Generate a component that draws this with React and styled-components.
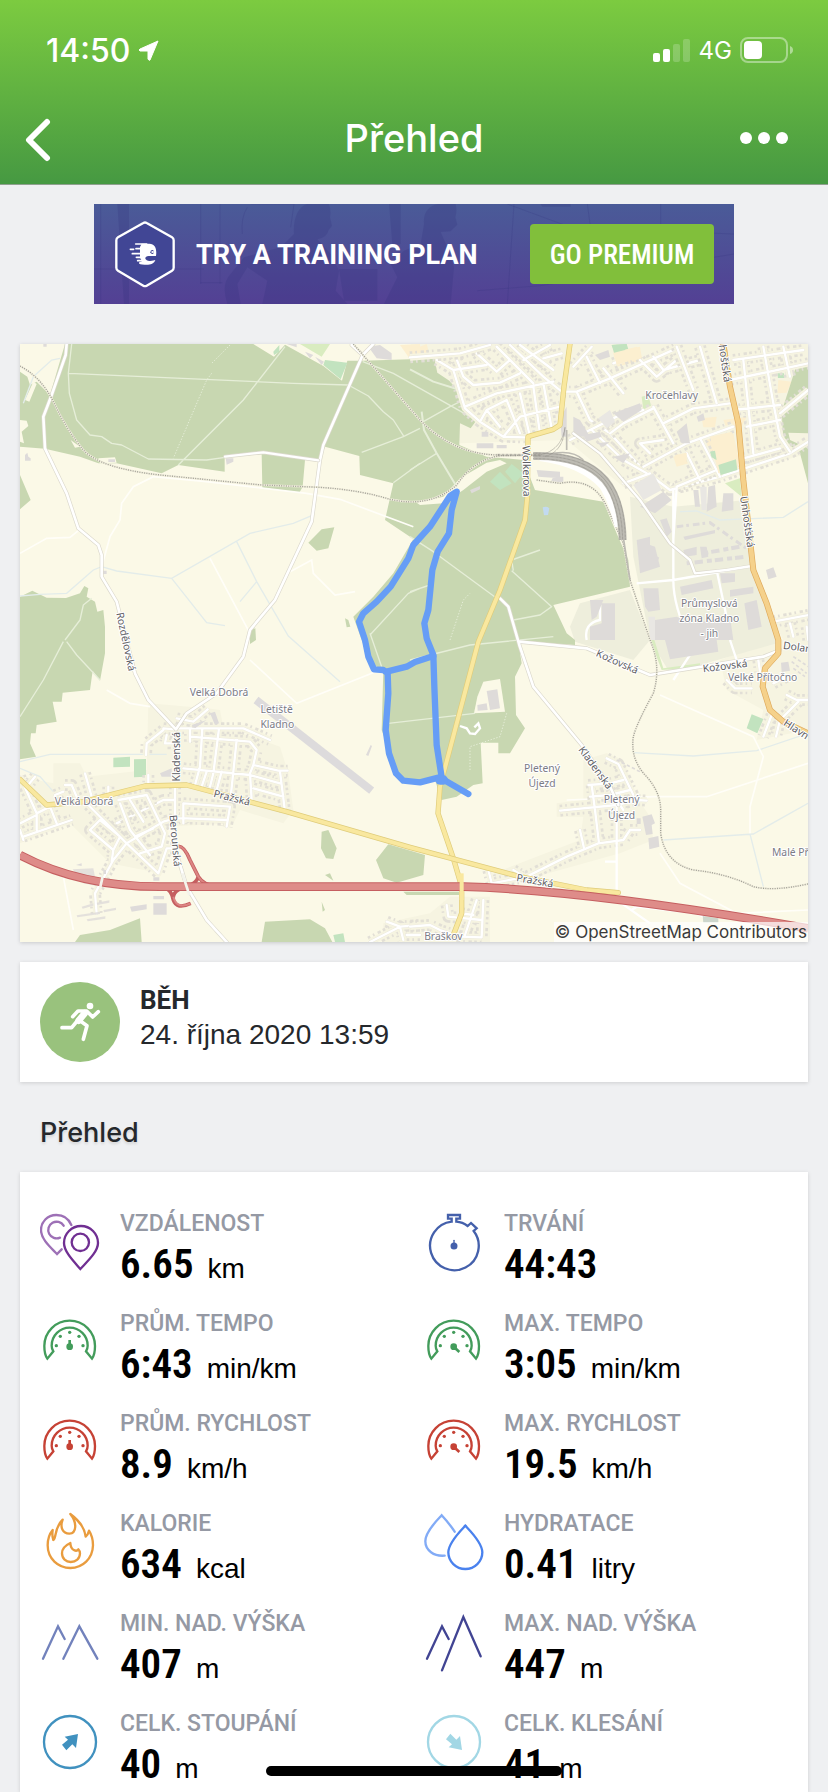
import React from 'react';
import styled, { createGlobalStyle } from 'styled-components';

const App = () => {
  return (
    <Page_main>
      <Global_style />
      <Header_section>
        <Status_bar>
          <Clock_div>
            14:50
            <svg width="21" height="21" viewBox="0 0 21 21" fill="#fff">
              <path d="M20 1 L12 20 Q11 21 10 19 L10 11 L2 11 Q0 10 2 9 Z" stroke="#fff" strokeLinejoin="round" />
            </svg>
          </Clock_div>
          <Signal_div>
            <svg width="38" height="24" viewBox="0 0 38 24" fill="#fff">
              <rect x="0" y="15" width="7" height="9" rx="2" />
              <rect x="10" y="11" width="7" height="13" rx="2" />
              <rect x="20" y="6" width="7" height="18" rx="2" opacity=".2" />
              <rect x="30" y="1" width="7" height="23" rx="2" opacity=".2" />
            </svg>
            4G
            <svg width="54" height="26" viewBox="0 0 54 26" fill="none">
              <rect x="1" y="1" width="46" height="24" rx="7" stroke="#fff" strokeWidth="2" opacity=".4" />
              <rect x="4" y="4" width="18" height="18" rx="4" fill="#fff" />
              <path d="M50 9 Q53 10 53 13 Q53 16 50 17 Z" fill="#fff" opacity=".45" />
            </svg>
          </Signal_div>
        </Status_bar>
        <Nav_bar>
          <Nav_button type="button" aria-label="Zpět">
            <svg width="28" height="44" viewBox="0 0 28 44" fill="none" stroke="#fff" strokeWidth="6" strokeLinecap="round" strokeLinejoin="round">
              <path d="M23 4 L5 22 L23 40" />
            </svg>
          </Nav_button>
          <h1>Přehled</h1>
          <Nav_button type="button" aria-label="Více" $right>
            <svg width="48" height="12" viewBox="0 0 48 12" fill="#fff">
              <circle cx="6" cy="6" r="6" />
              <circle cx="24" cy="6" r="6" />
              <circle cx="42" cy="6" r="6" />
            </svg>
          </Nav_button>
        </Nav_bar>
      </Header_section>

      <Content_section>
        <Banner_section>
          <BannerScene />
          <HexLogo />
          <strong>TRY A TRAINING PLAN</strong>
          <button type="button">GO PREMIUM</button>
        </Banner_section>

        <Map_figure>
          <RouteMap />
          <figcaption>© OpenStreetMap Contributors</figcaption>
        </Map_figure>

        <Activity_section>
          <Sport_badge>
            <Runner />
          </Sport_badge>
          <div>
            <b>BĚH</b>
            <time dateTime="2020-10-24T13:59">24. října 2020 13:59</time>
          </div>
        </Activity_section>

        <Section_title>Přehled</Section_title>

        <Stats_list>
          {stats.map((s) => (
            <Stat_item key={s.label}>
              {s.icon}
              <dl>
                <dt>{s.label}</dt>
                <dd>
                  <b>{s.value}</b>
                  {s.unit && <span>{s.unit}</span>}
                </dd>
              </dl>
            </Stat_item>
          ))}
        </Stats_list>
      </Content_section>
      <Home_indicator />
    </Page_main>
  );
};

export default App;

const Icon = ({ color, children }) => (
  <svg width="60" height="60" viewBox="0 0 180 180" fill="none" stroke={color} strokeWidth="7" strokeLinecap="round" aria-hidden="true">
    {children}
  </svg>
);

const Pins = () => (
  <Icon color="#702f92">
    <g stroke="#9d70b6">
      <path d="M94 39 C85 18 68 9 49 9 C22 9 3 30 3 54 C3 82 32 106 51 126 L65 112" />
      <path d="M71 41 A25 25 0 1 0 60 77" />
    </g>
    <path d="M121 171 C103 150 72 120 72 93 A50 50 0 0 1 174 93 C174 120 140 150 121 171 Z" />
    <circle cx="121" cy="91" r="26" />
  </Icon>
);

const Stopwatch = () => (
  <Icon color="#4460ab">
    <path d="M97 29 C112 30 122 35 131 42 L141 33 L158 49 L149 57 A73 73 0 1 1 83 29 V20 H72 V9 H108 V20 H97 Z" />
    <circle cx="90" cy="102" r="7" fill="#4460ab" />
    <path d="M90 100 V85" strokeWidth="4" />
  </Icon>
);

const Gauge = ({ color, max }) => (
  <Icon color={color}>
    <path d="M22 140 C15 130 13 116 13 102 A76 76 0 0 1 165 102 C165 116 163 130 156 140 L138 118 C141 113 143 108 143 101 A54 54 0 0 0 35 101 C35 108 37 113 40 118 Z" />
    <g fill={color} stroke="none">
      <circle cx="49" cy="101" r="5" />
      <circle cx="61" cy="73" r="5" />
      <circle cx="89" cy="61" r="5" />
      <circle cx="117" cy="73" r="5" />
      <circle cx="129" cy="101" r="5" />
      <circle cx="89" cy="104" r="10" />
    </g>
    <path d={max ? 'M90 105 L106 120' : 'M89 103 V84'} strokeWidth="8" strokeLinecap="butt" />
  </Icon>
);

const Flame = () => (
  <Icon color="#e99c3e">
    <path strokeLinejoin="round" d="M91 6 C118 26 134 46 137 74 C142 70 145 64 147 56 C156 70 159 84 159 100 C158 140 128 168 91 168 C54 168 23 140 23 100 C23 80 28 66 38 54 C36 68 37 76 40 84 C50 78 42 48 68 23 C59 46 68 64 88 65 C110 64 112 32 91 6 Z" />
    <path strokeLinejoin="round" d="M91 93 C76 100 66 111 66 124 C66 140 78 150 92 150 C108 150 120 140 120 124 C120 119 118 115 115 112 C110 120 92 116 91 93 Z" />
  </Icon>
);

const Drops = () => (
  <Icon color="#4a82ee">
    <path stroke="#82abf6" d="M92 59 C80 40 64 22 53 10 C40 24 4 58 4 88 C4 115 30 134 62 131" />
    <path d="M124 41 C110 56 73 92 73 121 A51 50 0 0 0 175 121 C175 92 138 56 124 41 Z" />
  </Icon>
);

const Peaks = ({ color, max }) => (
  <Icon color={color}>
    <path d="M9 140 L54 43 L74 81" />
    <path d={max ? 'M54 175 L118 15 L170 133' : 'M70 140 L118 43 L172 140'} />
  </Icon>
);

const Slope = ({ color, down }) => (
  <Icon color={color}>
    <circle cx="90" cy="90" r="78" />
    <path
      d="M114 66 L74 74 L84 83 L66 98 L79 115 L97 97 L108 108 Z"
      fill={color}
      stroke="none"
      transform={down ? 'translate(0 180) scale(1 -1)' : undefined}
    />
  </Icon>
);

const stats = [
  { label: 'VZDÁLENOST', value: '6.65', unit: 'km', icon: <Pins /> },
  { label: 'TRVÁNÍ', value: '44:43', icon: <Stopwatch /> },
  { label: 'PRŮM. TEMPO', value: '6:43', unit: 'min/km', icon: <Gauge color="#439c5b" /> },
  { label: 'MAX. TEMPO', value: '3:05', unit: 'min/km', icon: <Gauge color="#439c5b" max /> },
  { label: 'PRŮM. RYCHLOST', value: '8.9', unit: 'km/h', icon: <Gauge color="#c64235" /> },
  { label: 'MAX. RYCHLOST', value: '19.5', unit: 'km/h', icon: <Gauge color="#c64235" max /> },
  { label: 'KALORIE', value: '634', unit: 'kcal', icon: <Flame /> },
  { label: 'HYDRATACE', value: '0.41', unit: 'litry', icon: <Drops /> },
  { label: 'MIN. NAD. VÝŠKA', value: '407', unit: 'm', icon: <Peaks color="#7282bc" /> },
  { label: 'MAX. NAD. VÝŠKA', value: '447', unit: 'm', icon: <Peaks color="#414493" max /> },
  { label: 'CELK. STOUPÁNÍ', value: '40', unit: 'm', icon: <Slope color="#4091bf" /> },
  { label: 'CELK. KLESÁNÍ', value: '41', unit: 'm', icon: <Slope color="#a2d7e5" down /> },
];

const Runner = () => (
  <svg width="80" height="80" viewBox="120 126 240 240" fill="none" stroke="#fff" strokeWidth="11" strokeLinecap="round" strokeLinejoin="round">
    <circle cx="270" cy="198" r="10" fill="#fff" stroke="none" />
    <path d="M218 230 L234 213 L260 213 L278 231 L295 215" />
    <path d="M254 220 L236 242" strokeWidth="20" />
    <path d="M186 263 H215 L234 240" />
    <path d="M240 242 L261 257 L250 298" />
  </svg>
);

const HexLogo = () => (
  <svg width="62" height="70" viewBox="72 56 186 210">
    <path d="M160 68 Q165 65 170 68 L246 111 Q251 114 251 120 V202 Q251 208 246 211 L170 256 Q165 259 160 256 L84 211 Q79 208 79 202 V120 Q79 114 84 111 Z" fill="#414695" stroke="#fff" strokeWidth="7" />
    <g stroke="#fff" strokeWidth="5" strokeLinecap="round">
      <path d="M137 131 H170 M121 147 H131 M138 145 H160 M127 160 H160 M139 171 H160 M143 181 H158" />
    </g>
    <path d="M155 130 H178 C196 131 201 146 198 167 L176 167 C164 168 162 178 174 181 C184 183 192 180 196 179 C192 191 180 194 164 193 C150 193 144 190 148 186 L156 183 L150 172 V140 Z" fill="#fff" />
    <path d="M190 149 Q181 148 181 156 Q182 162 190 161 Z" fill="#414695" />
    <circle cx="187" cy="155" r="3" fill="#fff" />
  </svg>
);

const BannerScene = () => (
  <Scene_svg viewBox="0 0 1920 300" preserveAspectRatio="xMidYMid slice" aria-hidden="true">
    <g fill="#31307c" opacity=".22">
      <path d="M70 0 H105 V300 H90 Z" />
      <path d="M600 90 C595 30 625 -10 660 0 H705 Q712 20 708 40 L714 66 L704 78 Q700 100 670 106 L710 150 L735 200 L725 260 L760 300 H505 L520 230 L460 190 L430 240 L440 300 H400 Q380 240 410 210 L450 160 L560 130 Z" />
      <path d="M990 60 C985 15 1020 -5 1050 0 H1085 Q1090 20 1084 40 L1090 62 L1070 82 L1040 84 L1060 130 L1080 190 L1070 300 H870 L910 220 L890 180 L930 140 L980 120 Z" />
      <path d="M735 195 H850 V290 H750 Z M885 0 H920 V120 H895 Z M1340 0 H1430 V8 H1345 Z" />
    </g>
    <g stroke="#31307c" strokeWidth="3" opacity=".2" fill="none">
      <path d="M20 0 V300 M320 0 V240 M378 0 V240 M320 236 H385 M0 195 H330 M1260 0 L1240 300 M1480 0 L1510 220 M1150 260 L1340 245 L1920 150 M1240 0 L1430 70 L1920 90 M1700 0 V110" />
      <path d="M460 10 Q440 40 445 90 M470 0 H600 L590 70" />
    </g>
  </Scene_svg>
);

// the map is drawn on a 2364 x 1794 canvas, split in four quarters
const East = ({ children }) => <g transform="translate(1170 0)">{children}</g>;
const SouthWest = ({ children }) => <g transform="translate(0 900)">{children}</g>;
const SouthEast = ({ children }) => <g transform="translate(1170 900)">{children}</g>;

const Road = ({ d, w = 9, edge = '#dcd9cd', fill = '#fff' }) => (
  <g fill="none" strokeLinejoin="round" strokeLinecap="round">
    <path d={d} stroke={edge} strokeWidth={w + 4} />
    <path d={d} stroke={fill} strokeWidth={w} />
  </g>
);

// streets with small houses on both sides
const Streets = ({ d, ground = '#f6f4e1', dash = '8 9 5 11 10 7' }) => (
  <g fill="none" strokeLinejoin="round">
    <path d={d} stroke="#e2dfd6" strokeWidth="36" strokeDasharray={dash} />
    <path d={d} stroke={ground} strokeWidth="20" />
    <path d={d} stroke="#eae7dc" strokeWidth="9" strokeLinecap="round" />
    <path d={d} stroke="#fff" strokeWidth="7" strokeLinecap="round" />
  </g>
);

const Rail = ({ d, w = 4 }) => (
  <g fill="none">
    <path d={d} stroke="#f1eedd" strokeWidth={w + 2} />
    <path d={d} stroke="#a09f95" strokeWidth={w} strokeDasharray="3 4" />
  </g>
);

const Name = ({ x, y, turn = 0, place, start, children }) => (
  <Map_text $place={place} x={x} y={y + 11} textAnchor={start ? 'start' : 'middle'} transform={`rotate(${turn} ${x} ${y})`}>
    {children}
  </Map_text>
);

const RouteMap = () => (
  <svg viewBox="0 12 2364 1794" role="img" aria-label="Mapa trasy">
    <rect width="2364" height="1806" fill="#fbf9e7" />

    {/* built-up areas */}
    <g fill="#f6f4e1">
      <path d="M1170 12 H2364 V340 L2100 420 L1810 440 L1640 300 L1320 310 L1240 60 Z" />
      <path d="M385 1090 L560 1105 L600 1110 L610 1160 L780 1220 L805 1300 L820 1410 L790 1450 L660 1410 L640 1450 L430 1460 L420 1600 L270 1570 L150 1450 L0 1510 V1310 L100 1330 L100 1270 L180 1270 L200 1310 L380 1290 Z" />
      <path d="M1690 1260 L1760 1240 L1810 1260 L1850 1370 L1890 1430 L1900 1500 L1800 1540 L1440 1640 L1420 1600 L1680 1500 L1690 1430 L1610 1430 V1390 L1690 1380 Z" />
      <path d="M1230 1720 L1290 1670 H1410 V1806 H1090 V1750 Z" />
      <path d="M2100 960 L2260 900 H2364 V1170 L2210 1200 L2230 1110 L2120 1050 Z" />
      <path d="M2260 840 H2364 V900 H2290 Z" />
    </g>
    <g fill="#eeeedc">
      <path d="M1830 470 L1960 500 L2180 480 L2200 700 L2260 840 L2270 910 L1950 1000 L1890 900 L1840 650 Z" />
      <path d="M1680 790 L1830 750 L1890 900 L1840 960 L1665 905 L1650 860 Z" />
    </g>
    <g fill="#fcefd0">
      <path d="M1175 30 L1220 12 L1230 50 L1180 60 Z M2110 240 L2180 230 L2165 260 L2120 265 Z M2050 290 L2140 280 L2165 400 L2085 400 Z M1780 40 L1850 20 L1870 60 L1790 80 Z M1960 350 L2000 340 L2005 370 L1970 380 Z M2275 120 L2315 125 L2300 158 L2272 160 Z" />
      <path d="M1140 15 L1200 12 V55 L1165 50 Z" />
    </g>
    <g fill="#d9ecc0">
      <path d="M840 12 H930 L905 50 Z M1865 170 L1885 165 L1895 205 L1870 210 Z M2115 430 L2160 415 L2165 470 Z M1890 900 L1900 890 L1930 985 L2040 970 V982 L1925 990 Z" />
    </g>

    {/* woods */}
    <g fill="#c8d7b1">
      <path d="M135 12 H700 L762 50 L795 14 L910 78 L966 122 L982 62 H1028 L1170 58 L1243 55 L1252 98 L1288 122 L1320 160 L1335 215 L1370 240 L1352 265 L1320 250 L1318 315 L1400 350 L1510 360 L1545 450 L1750 485 L1790 580 L1825 660 L1830 740 L1600 795 L1640 880 L1665 900 V915 L1495 905 L1505 970 L1485 1010 L1488 1125 L1515 1165 L1470 1240 H1435 V1208 H1382 L1388 1330 L1360 1335 L1310 1370 L1265 1380 L1245 1320 L1170 1325 L1130 1300 L1085 1170 L1090 990 L1050 970 L1000 830 L1060 770 L1120 700 L1180 597 L1095 540 L1120 430 L1020 405 L1018 348 L915 320 L900 360 L855 360 L848 440 L838 458 L727 443 L725 343 L614 350 V395 L475 375 L425 400 L290 370 H235 L180 350 L75 326 L0 320 V95 L22 110 L30 135 L50 125 L90 165 Z" />
      <path d="M0 770 L37 752 L80 773 L138 774 L180 760 L193 738 L205 745 L200 770 L225 785 L232 815 L250 810 L255 860 V940 L240 1022 L218 992 L210 1050 L128 1058 L125 1085 H98 L110 1145 L50 1155 L47 1180 L33 1180 L30 1210 L48 1250 L0 1258 Z" />
      <path d="M0 405 L32 480 L0 508 Z M865 608 L905 568 L943 562 L925 625 L890 632 Z M975 835 L985 840 L991 860 L980 862 Z M690 870 L706 865 L708 900 L690 912 Z" />
      <path d="M905 1475 L925 1470 L950 1525 L940 1557 L918 1555 L903 1525 Z M1068 1560 L1105 1513 L1215 1545 L1210 1605 L1130 1628 L1090 1615 Z M735 1745 L870 1738 L915 1765 L937 1806 H725 Z M165 1806 L180 1785 L270 1770 L360 1735 L365 1806 Z M905 1685 L915 1710 L908 1715 Z M915 1605 L930 1600 L940 1622 Z M1150 1655 H1320 V1665 H1160 Z" />
      <path d="M2328 80 L2364 70 V280 L2305 278 L2310 300 L2364 325 V430 L2340 340 L2290 300 L2285 215 Z" />
    </g>
    <g fill="#fbf9e7">
      <path d="M1190 488 L1270 470 L1320 415 L1400 368 L1440 360 L1460 370 L1400 395 L1330 450 L1270 490 L1200 495 Z" />
      <path d="M1390 1025 L1440 1017 L1455 1115 L1362 1120 L1372 1070 Z" />
      <path d="M15 180 L40 125 L50 132 L28 185 Z M0 240 L20 242 L25 258 L5 275 L12 310 L0 305 Z M152 300 L180 320 L165 323 Z M235 355 L285 352 L290 368 L240 370 Z" />
    </g>
    <g fill="#c2e3bf">
      <path d="M915 60 L982 68 L962 118 L910 75 Z M760 35 L778 15 L778 35 L762 45 Z M1410 425 L1440 395 L1475 430 L1440 450 Z M1455 395 L1475 372 L1510 400 L1485 430 Z M1775 15 L1820 12 L1825 28 L1785 38 Z M2093 375 L2145 360 L2152 392 L2100 405 Z M2070 335 L2085 332 L2090 360 L2075 355 Z M2272 100 H2292 V114 H2274 Z" />
      <path d="M280 1253 L330 1250 V1280 L280 1282 Z M342 1258 L378 1257 V1310 L342 1312 Z M2180 1165 L2195 1123 L2230 1137 L2212 1180 Z M940 1785 L970 1780 L975 1806 H945 Z" />
    </g>
    <path d="M1568 502 Q1580 498 1588 505 L1584 525 L1572 526 Z" fill="#c2daf0" />

    {/* streams */}
    <g fill="none" stroke="#e3ecea" strokeWidth="4">
      <path d="M875 527 L820 550 L690 580 L455 715 L290 693 L245 680 L220 690 L140 760 L60 763 L0 768 M455 715 L560 848 L615 857 M650 605 L710 725 L805 888 L960 1025 M710 725 L660 785" />
      <path d="M120 55 L95 60 L40 110 L10 190 M0 1265 L90 1243 H440 M0 1285 L60 1310 L100 1355" />
      <path d="M1980 515 L2030 513 L2100 540 L2290 532 L2364 485 M1840 1238 L2020 1248 L2210 1232 L2364 1180 M1930 1500 L2200 1482 L2364 1390 M2190 1482 L2230 1640" />
    </g>

    {/* forest tracks */}
    <g fill="none" stroke="#e6eed8" strokeWidth="4" strokeLinejoin="round">
      <path d="M147 100 L820 130 L985 135 L1045 168 L1090 215 L1120 240 L1152 290 M795 20 L670 180 L475 375 M155 12 L145 100 L148 160 L170 240 L210 285 L245 290 L275 310 L305 315 L385 357 L560 360 L615 352 M1200 265 L1150 290 L1025 337 M1120 428 L1200 370" />
      <path d="M1028 65 L1120 100 L1350 230 M1210 245 L1290 200 L1330 180 M1170 390 L1250 340 M1170 590 L1240 635 L1430 775 M1480 692 L1475 660 L1560 630 M1475 692 L1595 800 L1560 825 L1480 840 M1170 755 L1230 735 M1050 885 L1165 760 L1200 745 M1050 880 L1085 980 M1170 960 L1350 915 L1600 890 M1105 1150 L1365 1120" />
      <path d="M1170 88 L1240 125 L1320 150 M1205 215 L1212 270 L1250 340 L1310 440" strokeWidth="6" />
      <path d="M0 1130 L70 1020 L130 905 M140 905 L170 945 L240 1020 M135 900 L180 840 L190 795 L215 775" />
      <path d="M575 100 L560 120 L460 355 M630 15 L575 70 M1290 900 L1330 780 L1350 760 M1350 1290 L1350 1220 L1440 1190 L1460 1120" strokeDasharray="4 5" strokeWidth="3" />
    </g>
    <g fill="none" stroke="#fffef8" strokeWidth="5">
      <path d="M0 640 L80 595 L150 592 L175 572 M245 680 L270 590 L300 540 L305 490 L340 440 L400 410 L560 425 L860 460 L960 478 L1180 560 M570 655 L690 880 M810 695 L875 660 L880 700 L945 765 L1005 755 M690 960 L830 1090 L1080 990" />
      <path d="M1640 1380 L1900 1370 L2060 1370 L2364 1270 M1920 1065 L2200 1190 L2230 1250 L2190 1400 V1480 M1920 1540 L1980 1630 L2150 1720 L2364 1710 M130 1610 L160 1770 M260 1050 L330 1090 L390 1100" />
    </g>

    <RouteMapTown />
    <RouteMapVillages />

    {/* country roads */}
    <Road d="M140 12 L137 45 L95 165 L70 230 L75 325 L140 460 L175 565 L235 615 L245 645 V710 L290 785 L345 1000 L385 1080 L468 1168 L500 1120 L590 1060 L670 950 L690 870 L765 780 L875 545 L900 360 L910 315 L1028 45 L995 15 M1028 45 L1060 12" w={8} />
    <Road d="M615 350 L730 337 L895 361" w={7} />
    <Road d="M1440 775 L1465 800 L1498 915 L1540 1040 L1685 1215 L1770 1340 L1795 1395 M1498 905 L1700 925 L1890 1005 L2230 950 L2280 930" w={8} />
    <Road d="M1660 280 L1740 340 L1860 480 L1950 610 L2010 660 L2025 700 L2120 690 L2195 678" w={7} />
    <Road d="M470 1540 L500 1640 L560 1740 L620 1806" w={8} />

    {/* railways */}
    <Rail d="M0 78 Q60 110 95 175 Q140 270 190 330 Q240 385 420 405 L725 435 L900 442 Q1020 450 1110 478 Q1230 505 1310 435 Q1360 360 1440 347 L1600 345" />
    <Rail d="M1000 12 L1200 240 Q1300 345 1440 345" />
    <Rail d="M1550 420 L1620 430 Q1720 410 1760 500 L1810 610 L1830 720 L1890 900 Q1925 980 1900 1060 Q1850 1150 1840 1190 Q1830 1260 1880 1310 Q1925 1360 1922 1420 V1480 Q1935 1570 2020 1590 Q2120 1600 2200 1640 Q2260 1655 2364 1632" />
    <path d="M1560 352 Q1690 370 1750 440 Q1780 490 1795 560" fill="none" stroke="#fff" strokeWidth="22" />
    <g fill="none" stroke="#bdbbb3">
      <path d="M1540 348 Q1690 345 1755 420 Q1805 480 1808 600" strokeWidth="24" />
      <path d="M1600 340 Q1660 330 1690 360 M1808 580 L1830 720 M1640 270 V330" strokeWidth="5" />
    </g>
    <g fill="none" stroke="#8f8d86" strokeWidth="3" strokeDasharray="2 2">
      <path d="M1540 340 Q1700 335 1765 420 Q1815 480 1816 600 M1540 348 Q1690 345 1755 420 Q1805 480 1808 600 M1540 356 Q1680 355 1745 420 Q1795 480 1800 600" />
      <path d="M1430 347 H1560 M1430 343 H1560 M1560 345 Q1625 330 1635 262 M1575 349 Q1630 335 1635 262" />
    </g>

    {/* airfield */}
    <path d="M708 1080 L1055 1352" stroke="#dddbdc" strokeWidth="24" />

    {/* main roads */}
    <Road d="M1650 12 L1632 140 L1620 255 L1600 268 L1524 290 L1522 470 L1515 540 L1440 750 L1375 905 L1260 1340 L1254 1420 L1300 1555 L1325 1640 V1720 L1298 1790" w={12} fill="#f9e89f" edge="#dfcc7a" />
    <Road d="M0 1318 L80 1395 L190 1385 L375 1338 L500 1335 L800 1415 L1170 1522 L1500 1610 L1700 1650 L1795 1658" w={12} fill="#f9e89f" edge="#dfcc7a" />
    <Road d="M2110 12 L2130 140 L2155 250 L2170 420 L2190 600 L2200 690 L2240 790 L2275 900 V940 L2235 985 L2228 1040 L2250 1110 L2290 1145 L2364 1180" w={14} fill="#f5d18b" edge="#dfaa5c" />
    <g fill="none">
      <path d="M470 1520 Q490 1512 510 1560 L535 1610 Q550 1635 590 1640 M535 1610 Q530 1630 500 1640 M430 1640 Q455 1650 460 1680 Q470 1710 512 1690 M460 1680 Q455 1650 500 1640" stroke="#c55f60" strokeWidth="11" />
      <path d="M470 1520 Q490 1512 510 1560 L535 1610 Q550 1635 590 1640 M460 1670 Q470 1710 512 1690" stroke="#dc8583" strokeWidth="6" />
      <path d="M0 1545 Q180 1640 420 1640 H1330 Q1700 1650 2364 1765" stroke="#c55f60" strokeWidth="26" />
      <path d="M0 1545 Q180 1640 420 1640 H1330 Q1700 1650 2364 1765" stroke="#de8c89" strokeWidth="20" />
    </g>
    <path d="M1325 1600 V1680" stroke="#f9e89f" strokeWidth="12" />
    <path d="M487 1600 L508 1665 M248 1610 L240 1645" stroke="#f4f4ec" strokeWidth="8" />

    {/* recorded track */}
    <g fill="none" stroke="#669df6" strokeWidth="19" strokeLinecap="round" strokeLinejoin="round">
      <path d="M1265 1312 L1250 1215 L1243 1040 L1240 945 L1220 895 L1213 850 L1225 810 L1237 690 L1253 635 L1287 580 L1295 510 L1310 455 L1290 468 L1230 560 L1180 615 L1165 655 L1112 740 L1070 785 L1030 820 L1017 845 L1035 900 L1045 950 L1062 988 L1090 990 L1103 1000 L1105 1060 L1097 1170 L1107 1240 L1128 1300 L1150 1322 L1200 1327 L1258 1312 L1345 1362" />
      <path d="M1103 994 L1160 980 L1185 966 L1240 948" />
      <path d="M1260 1320 H1270" strokeWidth="28" />
    </g>

    <Name x={318} y={905} turn={78}>Rozdělovská</Name>
    <East>
      <Name x={785} y={165} place>Kročehlavy</Name>
      <Name x={350} y={393} turn={89}>Wolkerova</Name>
      <Name x={1012} y={545} turn={82}>Unhošťská</Name>
      <Name x={945} y={70} turn={82}>hošťská</Name>
      <Name x={898} y={790} place>Průmyslová</Name>
      <Name x={898} y={834} place>zóna Kladno</Name>
      <Name x={898} y={880} place>- jih</Name>
    </East>
    <SouthWest>
      <Name x={597} y={157} place>Velká Dobrá</Name>
      <Name x={770} y={207} place>Letiště</Name>
      <Name x={772} y={252} place>Kladno</Name>
      <Name x={468} y={350} turn={-90}>Kladenská</Name>
      <Name x={192} y={485} place>Velká Dobrá</Name>
      <Name x={636} y={473} turn={14}>Pražská</Name>
      <Name x={466} y={602} turn={85}>Berounská</Name>
    </SouthWest>
    <SouthEast>
      <Name x={622} y={65} turn={24}>Kožovská</Name>
      <Name x={945} y={78} turn={-7}>Kožovská</Name>
      <Name x={1058} y={112} place>Velké Přítočno</Name>
      <Name x={1124} y={245} turn={33} start>Hlavn</Name>
      <Name x={1120} y={15} turn={8} start>Dolar</Name>
      <Name x={396} y={385} place>Pletený</Name>
      <Name x={396} y={430} place>Újezd</Name>
      <Name x={557} y={383} turn={54}>Kladenská</Name>
      <Name x={635} y={478} place>Pletený</Name>
      <Name x={635} y={525} place>Újezd</Name>
      <Name x={375} y={722} turn={10}>Pražská</Name>
      <Name x={1086} y={637} start place>Malé Př</Name>
      <Name x={100} y={890} place>Braškov</Name>
    </SouthEast>
  </svg>
);

const RouteMapTown = () => (
  <East>
    <Streets d="M80 60 L130 90 L165 205 L210 245 L280 290 L345 292 M135 45 L160 110 L190 135 L270 128 L330 100 M130 90 L230 75 M200 40 L260 95 L300 60 M260 20 L370 130 M300 15 L400 110 L455 155 M330 15 L430 90 M165 200 L260 160 L430 125 M210 245 L230 210 L290 180 M280 290 L330 230 L450 200 M230 210 L270 260 M290 180 L330 280 M330 160 L360 290 M370 140 L390 280 M400 130 L425 265 M340 60 L420 15 M400 55 L455 40" />
    <Streets d="M0 52 L150 40 L240 15 M460 155 L500 155 L540 240 L600 280 L700 390 L780 450 L930 410 L1140 340 L1195 305 M500 155 L600 115 L800 25 M530 50 L570 130 M490 80 L545 20 M580 85 L640 160 M610 70 L660 50 M690 60 L740 110 L800 60 M730 50 L760 90 L870 60" />
    <Streets d="M480 300 L620 230 L700 210 M545 270 L640 360 L710 400 M600 280 L640 250 L730 205 M730 200 L790 310 M760 250 L850 205 L960 190 M700 380 L830 310 L970 260 M720 340 L690 310 L760 300 M640 430 L720 400 M800 440 L920 390 M830 340 L870 420 M870 295 L930 410" />
    <Streets d="M800 20 L850 150 M870 20 L920 190 M960 120 L1195 70 M970 210 L1110 195 M1000 60 L1030 340 M1060 20 L1090 190 L1110 290 M1120 20 L1140 110 M970 60 L1180 30 M1010 260 L1110 240 M1000 355 L1110 325 M1110 220 L1195 150 M1110 290 L1140 335" />
    <Streets d="M1090 845 L1195 825 M1140 850 L1150 890 M1190 860 L1195 900" />
    <g fill="none" stroke="#fff" strokeWidth="7">
      <path d="M790 450 V720 M800 440 L790 600 M920 690 L960 880 M790 720 L1020 680 M680 730 L790 720 M840 900 Q790 800 790 720 M530 900 Q520 850 570 840 V780" />
    </g>
    {/* school grounds and pitches between the blocks */}
    <path d="M875 235 L920 230 L915 262 L880 262 Z M900 290 L965 275 L985 385 L925 400 Z M610 35 L690 20 L695 50 L620 75 Z M795 345 L830 338 V370 L800 378 Z" fill="#fcefd0" />
    <path d="M925 375 L978 358 L982 390 L932 405 Z M605 15 L650 12 L645 30 L612 38 Z M900 335 L915 332 L920 360 L905 352 Z" fill="#c2e3bf" />
    {/* large buildings */}
    <g fill="#dedbd9">
      <path d="M610 220 L690 190 L695 210 L640 245 Z M490 230 L510 240 L540 290 L490 290 Z M520 285 L570 275 L575 290 L530 305 Z M690 500 L760 455 L785 480 L735 520 Z M895 440 L915 435 L920 500 L890 515 Z M940 460 H970 V510 L935 515 Z M850 450 L865 450 L870 500 L855 500 Z M1068 690 L1090 682 L1100 710 L1075 718 Z M555 45 L595 30 L600 50 L570 60 Z M860 230 L880 220 L885 240 L865 245 Z M800 275 L830 250 L840 310 L815 310 Z" />
      <path d="M680 600 L720 590 V615 L735 620 L750 680 L690 700 Z M750 540 L770 535 L785 575 L770 590 Z M820 590 L915 570 V580 L825 600 Z M820 630 L860 620 V645 L825 650 Z M870 620 L890 620 L895 650 L875 655 Z M810 740 L905 720 L910 745 L815 765 Z M700 745 L745 745 L750 810 L715 815 L705 800 Z M930 700 L975 700 V725 L935 730 Z M960 750 L1030 740 V760 L960 770 Z M1003 790 L1040 780 L1055 860 L1015 870 Z M540 780 H580 L560 830 L545 840 Z M575 790 H615 V900 H540 V860 L575 850 Z M735 840 L800 830 L850 850 L960 830 L970 900 H735 Z" />
      <path d="M200 310 H250 V325 H200 Z M215 275 H235 V290 H215 Z M260 315 H290 V325 H260 Z M380 390 L450 395 V415 L385 410 Z M180 450 L210 438 V448 L185 460 Z M430 410 H460 V430 H420 Z M450 235 L470 200 V290 L455 290 Z M610 350 L660 340 L640 370 Z M580 320 L560 310 L600 305 Z" />
    </g>
    <g fill="#e9e7e3">
      <path d="M670 435 L730 400 L755 450 L700 480 Z M565 235 L600 210 L615 245 L590 265 Z M870 440 H890 V510 H875 Z M715 830 H735 V900 H720 Z" />
    </g>
    <path d="M800 560 L900 548 L1030 640" fill="none" stroke="#dedbd9" strokeWidth="9" strokeDasharray="20 9 8 12" />
    <path d="M830 670 L1010 650 M880 640 L990 620 M700 640 L750 660" fill="none" stroke="#dedbd9" strokeWidth="12" strokeDasharray="15 9 25 12" />
  </East>
);

const RouteMapVillages = () => (
  <g>
    <SouthWest>
      <Streets d="M470 265 H670 L750 300 M510 265 V305 M510 290 L690 305 L710 330 L700 375 L690 400 L695 480 M547 265 L540 380 L525 435 M597 265 L580 400 L570 440 M650 300 L630 490 M490 385 L690 405 L780 430 M700 375 L775 392 H803 M780 395 L795 515 M700 445 L790 470 M605 395 L590 450 M560 395 L545 440" />
      <Streets d="M465 440 V525 M490 490 L630 500 L620 560 M490 490 V550 M460 535 H500 L620 540 M465 480 H430 L290 550 M430 265 L465 268 M430 270 L380 310 L378 345 M470 235 L520 245 L563 208 M440 285 L435 310 H470" />
      <Streets d="M205 495 L320 610 L415 700 L440 625 H470 M295 480 L380 465 L435 580 L425 620 L360 640 M300 490 L330 570 L390 645 M330 480 L370 545 M320 610 L430 545 L465 535 M345 590 L400 565 M300 590 L240 540 L210 570 L280 630 L300 590 M320 610 L280 660 L225 760 L230 820 M280 630 L275 665" />
      <Streets d="M0 410 L50 520 V570 M10 600 L0 570 M10 590 L155 540 M90 500 L110 550 M50 520 L90 500 M20 440 L45 410 M0 550 L50 525 M195 400 L215 470 M385 405 V440 M265 440 V470 M135 435 H155 L170 470 M105 465 L130 455" />
      <Streets d="M1050 906 L1140 860 L1200 855 M1100 845 L1140 860 L1150 900 M1160 885 H1200" />
      <g fill="#dedbda">
        <path d="M400 768 H432 V778 H400 Z M400 790 H440 V824 H400 Z M330 800 L380 793 V808 L335 815 Z M570 220 L585 215 L597 250 L585 255 Z M515 255 L560 240 L525 265 Z M400 712 H418 V722 H400 Z M168 675 L185 670 V678 Z M250 690 L258 690 V702 H250 Z M1052 315 L1056 318 L1045 348 L1038 345 Z M420 400 L455 385 V410 H425 Z" />
        <path d="M185 800 L220 790 V797 L188 806 Z M230 788 L268 781 V788 L232 795 Z M170 826 L240 815 V822 L172 832 Z M250 810 L288 803 V810 L252 817 Z M200 838 L256 829 V836 L203 844 Z M158 688 L220 685 L230 738 L190 730 Z" opacity=".8" />
      </g>
    </SouthWest>
    <g fill="#dedbda">
      <path d="M15 345 L22 338 L25 350 L32 355 V362 H15 Z M617 355 H640 V365 L620 374 Z M265 358 H285 V366 H265 Z M248 692 H260 V702 H248 Z M855 35 L880 45 L870 55 Z M885 50 L912 65 L905 75 Z M800 12 H830 V22 Z M1045 20 L1080 15 L1115 40 V60 L1070 55 Z M70 12 H80 V20 H70 Z" />
    </g>
    <SouthEast>
      <Streets d="M235 690 L245 730 L350 710 L470 650 L565 610 L640 600 L660 570 M310 690 L345 712 M450 512 L620 495 L680 480 L710 482 M545 435 L555 510 L567 610 M590 355 L625 372 L670 465 M535 435 L600 430 L640 420 M540 470 L600 465 L660 450 M620 500 V600 M510 570 L522 625 M660 570 L690 570 M600 450 L640 510" />
      <Streets d="M110 795 L115 830 L215 840 M200 780 L165 885 M220 780 L215 890 M0 860 L60 855 L90 870 L150 890 L215 892 M155 820 L190 825" />
      <Streets d="M1045 60 L1050 95 M950 120 L975 145 H1025 M1085 225 L1060 290 M1165 185 L1110 240 L1098 290 M1130 165 L1160 180 H1195 M1090 130 L1130 110" />
      <g fill="none" stroke="#fff" strokeWidth="7">
        <path d="M150 258 L170 265 L180 280 L195 282 L210 265 L205 250 L193 262 M620 600 V755 M585 665 H620 M635 790 L720 850 M665 810 L680 800 L860 820 L890 835 M960 0 L980 60 M850 0 V30 L790 120" />
      </g>
      <g fill="#dedbd9">
        <path d="M230 153 L262 148 L270 205 L240 210 Z M202 195 L230 190 L233 210 L203 212 Z M697 530 L725 523 L735 550 L725 555 L728 582 L708 585 Z M715 595 L745 588 L748 620 L718 628 Z M765 0 H920 L925 35 L780 58 Z M1113 68 L1135 65 L1140 92 L1115 96 Z M680 535 H692 V552 H680 Z" />
        <path d="M878 828 L925 835 V848 H880 Z" fill="#cdd6cc" />
      </g>
      <g fill="none" stroke="#dedbd9" strokeWidth="5" strokeDasharray="10 7">
        <path d="M1150 50 L1195 80 M1145 65 L1190 100 M1150 85 L1185 110 M620 360 L690 395" />
      </g>
    </SouthEast>
  </g>
);

const Global_style = createGlobalStyle`
  * {
    box-sizing: border-box;
  }
  body {
    margin: 0;
    background: #eff0f2;
  }
`;
const Page_main = styled.main`
  min-height: 100vh;
  display: flex;
  flex-direction: column;
  background: #eff0f2;
  color: #25282c;
  font-family: "Liberation Sans", Arial, sans-serif;
`;
const Header_section = styled.header`
  background: linear-gradient(#7ccb40, #469942);
  border-bottom: 1px solid #8fa08f;
  color: #fff;
`;
const Status_bar = styled.div`
  display: flex;
  justify-content: space-between;
  align-items: center;
  height: 100px;
  padding: 0 34px 0 46px;
  font-family: Inter, sans-serif;
`;
const Clock_div = styled.div`
  display: flex;
  align-items: center;
  gap: 8px;
  font-size: 32px;
  font-weight: 500;
`;
const Signal_div = styled.div`
  display: flex;
  align-items: center;
  gap: 8px;
  font-size: 24px;
`;
const Nav_bar = styled.nav`
  display: grid;
  grid-template-columns: 100px 1fr 100px;
  align-items: center;
  height: 84px;
  padding-bottom: 8px;

  h1 {
    margin: 0;
    text-align: center;
    font: 500 38px/48px Inter, sans-serif;
  }
`;
const Nav_button = styled.button`
  display: flex;
  justify-content: ${(p) => (p.$right ? 'flex-end' : 'flex-start')};
  padding: ${(p) => (p.$right ? '12px 40px 12px 0' : '4px 0 0 24px')};
  border: 0;
  background: none;
  cursor: pointer;
`;
const Content_section = styled.div`
  flex: 1;
  display: flex;
  flex-direction: column;
  padding: 19px 20px 0;
`;
const Banner_section = styled.section`
  position: relative;
  display: flex;
  align-items: center;
  align-self: center;
  width: 640px;
  max-width: 100%;
  height: 100px;
  padding: 0 20px;
  margin-bottom: 40px;
  background: linear-gradient(#4a5b98, #534094);
  color: #fff;
  overflow: hidden;

  > * {
    position: relative;
  }
  strong {
    flex: 1;
    padding: 2px 0 0 20px;
    font: 700 27px/32px Roboto, sans-serif;
    white-space: nowrap;
  }
  button {
    width: 184px;
    height: 60px;
    padding: 2px 0 0;
    border: 0;
    border-radius: 4px;
    background: #81bf3b;
    color: #fff;
    font: 500 27px/32px "Roboto Condensed", Roboto, sans-serif;
    cursor: pointer;
  }
`;
const Scene_svg = styled.svg`
  && {
    position: absolute;
    inset: 0;
    width: 100%;
    height: 100%;
  }
`;
const Map_figure = styled.figure`
  position: relative;
  margin: 0 0 20px;
  box-shadow: 0 1px 4px rgba(0, 0, 0, 0.16);

  svg {
    display: block;
    width: 100%;
  }
  figcaption {
    position: absolute;
    right: 0;
    bottom: 0;
    padding: 0 1px;
    background: rgba(255, 255, 255, 0.7);
    color: #3a3a3a;
    font: 400 17px/20px Inter, sans-serif;
  }
`;
const Map_text = styled.text`
  font-family: "Noto Sans", sans-serif;
  font-size: 31px;
  fill: ${(p) => (p.$place ? '#7c7c86' : '#5e5e64')};
  stroke: #fff;
  stroke-width: 6px;
  stroke-linejoin: round;
  paint-order: stroke;
`;
const Activity_section = styled.section`
  display: flex;
  gap: 20px;
  height: 120px;
  padding: 20px;
  background: #fff;
  box-shadow: 0 1px 4px rgba(0, 0, 0, 0.14);

  b, time {
    display: block;
  }
  b {
    font: 700 26px/36px Roboto, sans-serif;
  }
  time {
    font-size: 28px;
    line-height: 34px;
  }
`;
const Sport_badge = styled.div`
  width: 80px;
  height: 80px;
  border-radius: 50%;
  background: #99c27d;
`;
const Section_title = styled.h2`
  margin: 0;
  padding: 33px 20px 21px;
  font: 500 27px/36px Inter, sans-serif;
  text-shadow: 0 2px 3px rgba(0, 0, 0, 0.12);
`;
const Stats_list = styled.section`
  flex: 1;
  display: grid;
  grid-template-columns: 1fr 1fr;
  align-content: start;
  row-gap: 26px;
  padding: 40px 0 0 20px;
  background: #fff;
  box-shadow: 0 1px 4px rgba(0, 0, 0, 0.14);
`;
const Stat_item = styled.div`
  display: flex;
  gap: 20px;

  dl, dd {
    margin: 0;
  }
  dt {
    margin-bottom: 4px;
    color: #9599a4;
    font: 500 23px/24px Roboto, sans-serif;
  }
  dd {
    display: flex;
    align-items: baseline;
    gap: 14px;
    height: 46px;
    color: #000;
    line-height: 48px;
  }
  b {
    font-family: "Roboto Condensed", Roboto, sans-serif;
    font-size: 41px;
    font-weight: 600;
  }
  span {
    font-size: 28px;
  }
`;
const Home_indicator = styled.div`
  position: fixed;
  bottom: 16px;
  left: 50%;
  width: 296px;
  height: 10px;
  margin-left: -148px;
  border-radius: 5px;
  background: #000;
`;
